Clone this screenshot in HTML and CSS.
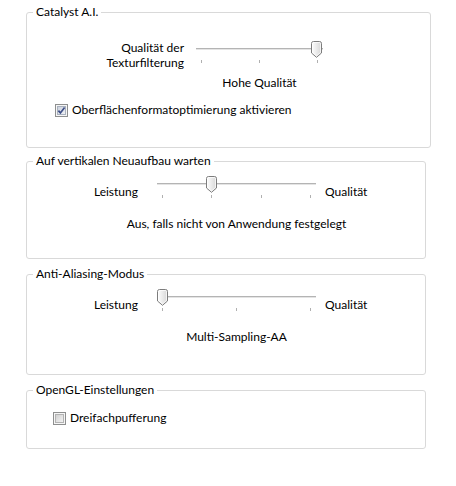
FILE: index.html
```html
<!DOCTYPE html>
<html lang="de">
<head>
<meta charset="utf-8">
<link rel="stylesheet" href="styles.css">
</head>
<body>
<div class="page">
  <fieldset class="group g1">
    <legend>Catalyst A.I.</legend>
    <div class="slider-grid sg1">
      <div class="lbl lbl-two">Qualität der<br>Texturfilterung</div>
      <div class="slider s1">
        <div class="track-area">
          <div class="track"></div>
          <svg class="thumb" style="left:115px" width="11" height="17" viewBox="0 0 11 17"><defs><linearGradient id="tg1" x1="0" y1="0" x2="1" y2="0"><stop offset="0" stop-color="#ffffff"/><stop offset="1" stop-color="#d6d6d6"/></linearGradient></defs><path d="M0.5 2.5 Q0.5 0.5 2.5 0.5 H8.5 Q10.5 0.5 10.5 2.5 V12 L5.5 16.3 L0.5 12 Z" fill="url(#tg1)" stroke="#7c7c7c"/><path d="M1.5 2.5 Q1.5 1.5 2.5 1.5 H8.5 Q9.5 1.5 9.5 2.5 V11.5 L5.5 15 L1.5 11.5 Z" fill="none" stroke="#ffffff" stroke-opacity="0.7"/></svg>
        </div>
        <div class="ticks"><span></span><span></span><span></span></div>
      </div>
      <div class="caption">Hohe Qualität</div>
    </div>
    <label class="check chk1"><svg class="box" width="13" height="13" viewBox="0 0 13 13"><defs><linearGradient id="cg1" x1="0" y1="0" x2="1" y2="1"><stop offset="0" stop-color="#c9d0dc"/><stop offset="1" stop-color="#f2f3f6"/></linearGradient></defs><rect x="0.5" y="0.5" width="12" height="12" fill="#f6f6f6" stroke="#8e8f8f"/><rect x="2.5" y="2.5" width="8" height="8" fill="url(#cg1)" stroke="#a9b1be"/><path d="M3.4 6.6 L5.4 8.9 L9.6 3.4" fill="none" stroke="#3e4f88" stroke-width="1.7"/></svg><span>Oberflächenformatoptimierung aktivieren</span></label>
  </fieldset>

  <fieldset class="group g2">
    <legend>Auf vertikalen Neuaufbau warten</legend>
    <div class="slider-grid sg2">
      <div class="lbl">Leistung</div>
      <div class="slider s2">
        <div class="track-area">
          <div class="track"></div>
          <svg class="thumb" style="left:49px" width="11" height="17" viewBox="0 0 11 17"><defs><linearGradient id="tg2" x1="0" y1="0" x2="1" y2="0"><stop offset="0" stop-color="#ffffff"/><stop offset="1" stop-color="#d6d6d6"/></linearGradient></defs><path d="M0.5 2.5 Q0.5 0.5 2.5 0.5 H8.5 Q10.5 0.5 10.5 2.5 V12 L5.5 16.3 L0.5 12 Z" fill="url(#tg2)" stroke="#7c7c7c"/><path d="M1.5 2.5 Q1.5 1.5 2.5 1.5 H8.5 Q9.5 1.5 9.5 2.5 V11.5 L5.5 15 L1.5 11.5 Z" fill="none" stroke="#ffffff" stroke-opacity="0.7"/></svg>
        </div>
        <div class="ticks"><span></span><span></span><span></span><span></span></div>
      </div>
      <div class="lbl-end">Qualität</div>
      <div class="caption cap-wide">Aus, falls nicht von Anwendung festgelegt</div>
    </div>
  </fieldset>

  <fieldset class="group g3">
    <legend>Anti-Aliasing-Modus</legend>
    <div class="slider-grid sg2">
      <div class="lbl">Leistung</div>
      <div class="slider s2">
        <div class="track-area">
          <div class="track"></div>
          <svg class="thumb" style="left:0px" width="11" height="17" viewBox="0 0 11 17"><defs><linearGradient id="tg3" x1="0" y1="0" x2="1" y2="0"><stop offset="0" stop-color="#ffffff"/><stop offset="1" stop-color="#d6d6d6"/></linearGradient></defs><path d="M0.5 2.5 Q0.5 0.5 2.5 0.5 H8.5 Q10.5 0.5 10.5 2.5 V12 L5.5 16.3 L0.5 12 Z" fill="url(#tg3)" stroke="#7c7c7c"/><path d="M1.5 2.5 Q1.5 1.5 2.5 1.5 H8.5 Q9.5 1.5 9.5 2.5 V11.5 L5.5 15 L1.5 11.5 Z" fill="none" stroke="#ffffff" stroke-opacity="0.7"/></svg>
        </div>
        <div class="ticks"><span></span><span></span><span></span></div>
      </div>
      <div class="lbl-end">Qualität</div>
      <div class="caption cap-wide">Multi-Sampling-AA</div>
    </div>
  </fieldset>

  <fieldset class="group g4">
    <legend>OpenGL-Einstellungen</legend>
    <label class="check chk4"><svg class="box" width="13" height="13" viewBox="0 0 13 13"><defs><linearGradient id="cg4" x1="0" y1="0" x2="1" y2="1"><stop offset="0" stop-color="#cfcfcf"/><stop offset="1" stop-color="#f4f4f4"/></linearGradient></defs><rect x="0.5" y="0.5" width="12" height="12" fill="#f6f6f6" stroke="#8e8f8f"/><rect x="2.5" y="2.5" width="8" height="8" fill="url(#cg4)" stroke="#b3b3b3"/></svg><span>Dreifachpufferung</span></label>
  </fieldset>
</div>
</body>
</html>
```
FILE: styles.css
```css
* { box-sizing: border-box; }
html, body { margin: 0; padding: 0; background: #ffffff; }
body {
  font-family: "Lato", "Open Sans", "Noto Sans", sans-serif;
  font-size: 12px;
  color: #000000;
}
.page {
  padding: 4px 0 0 26px;
}
.group {
  margin: 0;
  padding: 0;
  border: 1px solid #d9d9d9;
  border-radius: 3px;
  min-width: 0;
}
.group legend {
  margin-left: 6px;
  padding: 0 3px;
  line-height: 16px;
  height: 16px;
}
.g1 { width: 405px; height: 144px; padding-top: 20px; }
.g2 { width: 400px; height: 106px; margin-top: 5px; padding-top: 7px; }
.g3 { width: 400px; height: 109px; margin-top: 7px; padding-top: 7px; }
.g4 { width: 400px; height: 67px; margin-top: 7px; padding-top: 12px; }

.slider-grid { display: grid; align-items: start; }
.sg1 { grid-template-columns: 157px 12px 127px; }
.sg1 .lbl { grid-column: 1; }
.sg1 .slider { grid-column: 3; margin-top: 1px; }
.sg1 .caption { grid-column: 3; margin-top: 5px; }

.sg2 { grid-template-columns: 111px 19px 159px 9px auto; }
.sg2 .lbl { grid-column: 1; padding-top: 8px; }
.sg2 .slider { grid-column: 3; }
.sg2 .lbl-end { grid-column: 5; padding-top: 8px; }
.sg2 .caption { grid-column: 3; margin-top: 16px; }

.lbl { text-align: right; line-height: 16px; white-space: nowrap; }
.lbl-two { line-height: 15px; }
.lbl-end { line-height: 16px; white-space: nowrap; }
.caption {
  line-height: 16px;
  white-space: nowrap;
  justify-self: center;
}

.slider { display: flex; flex-direction: column; }
.track-area { position: relative; height: 19px; }
.track {
  margin-top: 7px;
  height: 2px;
  border-top: 1px solid #b4b4b4;
  border-bottom: 1px solid #e4e4e4;
}
.thumb { position: absolute; top: 0; display: block; }
.ticks {
  display: flex;
  justify-content: space-between;
  padding: 0 5px;
  height: 4px;
}
.ticks span { width: 1px; height: 3px; background: #b0b0b0; }

.check {
  display: flex;
  align-items: center;
  gap: 4px;
  line-height: 16px;
  white-space: nowrap;
}
.check .box { display: block; flex: none; }
.chk1 { margin: 11px 0 0 28px; }
.chk4 { margin-left: 26px; }
```
